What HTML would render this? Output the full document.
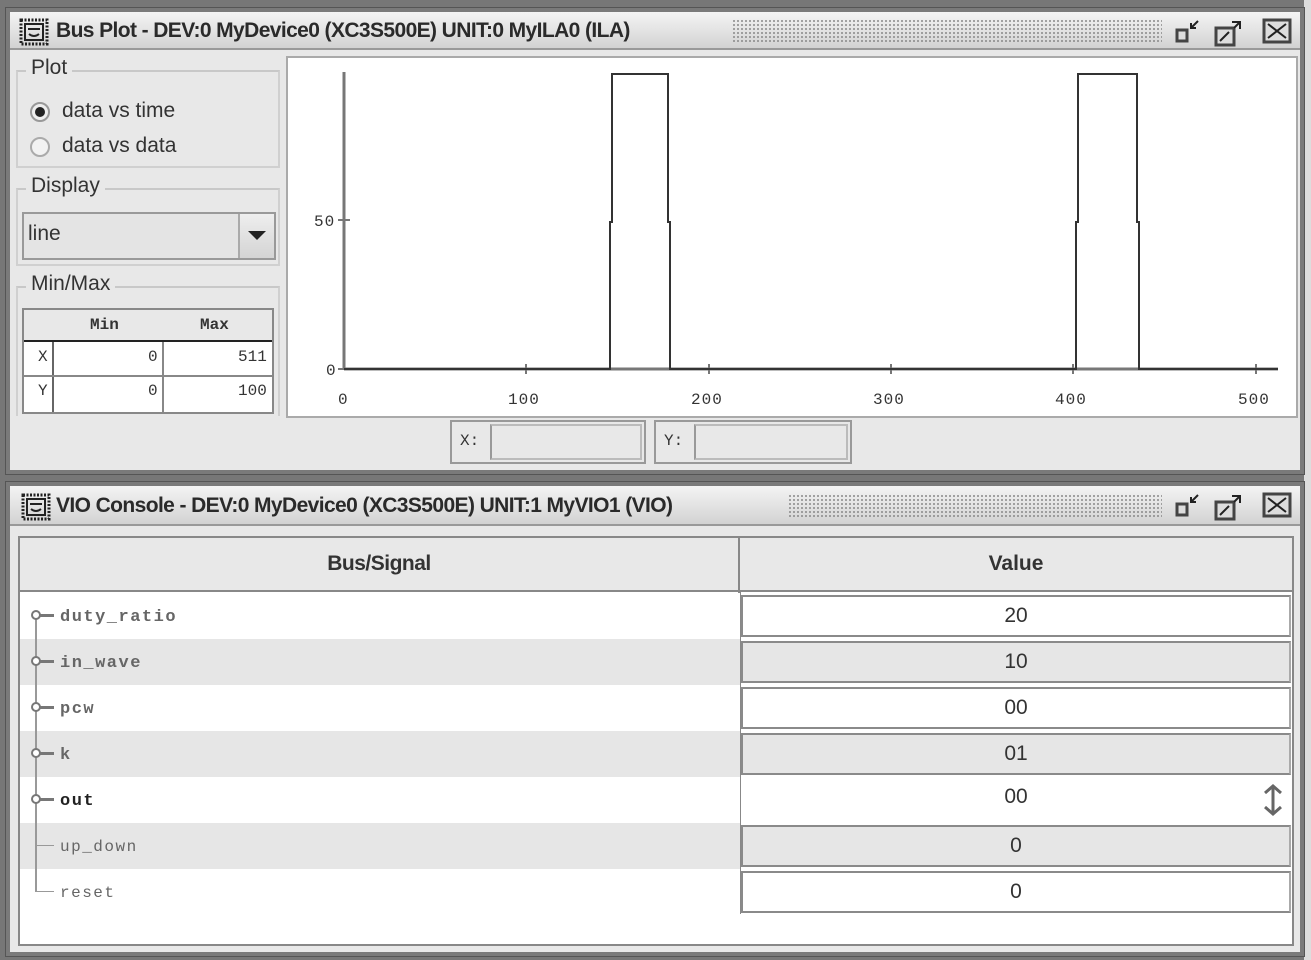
<!DOCTYPE html>
<html><head><meta charset="utf-8"><style>
*{box-sizing:border-box;margin:0;padding:0}
body{width:1311px;height:960px;overflow:hidden;background:#e4e4e4;font-family:"Liberation Sans",sans-serif;position:relative}
.a{position:absolute}
.win{position:absolute;background:#e8e8e8;border:4px solid #7a7a7a;outline:1px solid #555}
.title{position:absolute;left:0;right:0;height:38px;background:linear-gradient(#f4f4f4,#e0e0e0 60%,#d2d2d2);border-bottom:2px solid #999;font-weight:bold;font-size:21px;color:#2a2a2a;letter-spacing:-0.6px;line-height:38px;padding-left:46px;white-space:nowrap}
.dots{position:absolute;top:7px;height:24px;background-image:radial-gradient(#888 0.8px,transparent 1px);background-size:4px 4px}
.grp{position:absolute;border:2px solid #d0d0d0;border-top-color:#c8c8c8}
.gl{position:absolute;background:#e8e8e8;font-size:21px;color:#333;padding:0 5px;top:-16px;left:8px}
.cell{position:absolute;font-family:"Liberation Mono",monospace;font-size:16px;color:#333}
.row{position:absolute;left:0;width:720px;height:46px}
.sig{position:absolute;left:40px;font-family:"Liberation Mono",monospace;font-weight:bold;font-size:17px;color:#666;letter-spacing:1.5px;top:15px}
.val{position:absolute;left:721px;width:550px;height:42px;top:2px;border:2px solid #8a8a8a;border-right-color:#aaa;text-align:center;font-size:21px;color:#333;line-height:38px}
.knob{position:absolute;left:11px;top:17px;width:10px;height:10px;border:2.5px solid #777;border-radius:50%;background:#fff;z-index:2}
.stub{position:absolute;left:20px;top:21px;width:14px;height:3px;background:#777}
</style></head><body>
<div class="a" style="left:0;top:0;width:1311px;height:960px;background:#777"></div>
<div class="a" style="left:1304px;top:0;width:7px;height:960px;background:#ddd"></div>

<div class="win" style="left:6px;top:8px;width:1298px;height:466px">
 <div class="title" style="top:0">Bus Plot - DEV:0 MyDevice0 (XC3S500E) UNIT:0 MyILA0 (ILA)</div>
 <div class="dots" style="left:722px;width:430px"></div>
 <svg class="a" style="left:8px;top:6px" width="32" height="28" viewBox="0 0 32 28"><rect x="3" y="2" width="26" height="24" fill="none" stroke="#222" stroke-width="3" stroke-dasharray="2 1.5"/><rect x="7" y="6" width="18" height="16" fill="none" stroke="#222" stroke-width="2"/><path d="M10 11h12M11 16q5 4 10 0" stroke="#222" stroke-width="2" fill="none"/></svg>
 <svg class="a" style="left:1160px;top:4px" width="130" height="32"><rect x="7" y="14" width="10" height="11" fill="#ddd" stroke="#444" stroke-width="3"/><path d="M28 5l-7 7M21 7v5h5" stroke="#222" stroke-width="2" fill="none"/><rect x="46" y="12" width="18" height="17" fill="#ddd" stroke="#444" stroke-width="3"/><path d="M50 25l9-9M62 6l8 0 0 7M70 6l-6 6" stroke="#222" stroke-width="2" fill="none"/><rect x="94" y="4" width="26" height="22" fill="#ddd" stroke="#444" stroke-width="3"/><path d="M98 8l18 14M116 8l-18 14" stroke="#222" stroke-width="2"/></svg>

 <div class="grp" style="left:6px;top:58px;width:264px;height:98px"><div class="gl">Plot</div>
  <div class="a" style="left:12px;top:30px;width:20px;height:20px;border:2px solid #999;border-radius:50%;background:#eee"><div class="a" style="left:3px;top:3px;width:10px;height:10px;border-radius:50%;background:#222"></div></div>
  <div class="a" style="left:44px;top:27px;font-size:21px;color:#333">data vs time</div>
  <div class="a" style="left:12px;top:65px;width:20px;height:20px;border:2px solid #aaa;border-radius:50%;background:#f2f2f2"></div>
  <div class="a" style="left:44px;top:62px;font-size:21px;color:#333">data vs data</div>
 </div>
 <div class="grp" style="left:6px;top:176px;width:264px;height:78px"><div class="gl">Display</div>
  <div class="a" style="left:4px;top:22px;width:254px;height:48px;border:2px solid #999;background:#e4e4e4"><div class="a" style="left:4px;top:8px;font-size:21px;color:#333">line</div>
   <div class="a" style="left:214px;top:0;width:36px;height:44px;border-left:2px solid #aaa;background:linear-gradient(#eee,#d4d4d4)"><div class="a" style="left:8px;top:17px;border-left:9px solid transparent;border-right:9px solid transparent;border-top:9px solid #222"></div></div>
  </div>
 </div>
 <div class="grp" style="left:6px;top:274px;width:264px;height:130px;border-bottom:none"><div class="gl">Min/Max</div>
  <div class="a" style="left:4px;top:20px;width:252px;height:106px;border:2px solid #888;background:#fff">
   <div class="a" style="left:0;top:0;width:248px;height:32px;background:#e8e8e8;border-bottom:2px solid #222"></div>
   <div class="cell" style="left:66px;top:6px;font-weight:bold">Min</div>
   <div class="cell" style="left:176px;top:6px;font-weight:bold">Max</div>
   <div class="a" style="left:28px;top:32px;width:2px;height:70px;background:#666"></div>
   <div class="a" style="left:138px;top:32px;width:2px;height:70px;background:#888"></div>
   <div class="a" style="left:0;top:65px;width:248px;height:2px;background:#888"></div>
   <div class="cell" style="left:14px;top:38px">X</div><div class="cell" style="left:124px;top:38px">0</div><div class="cell" style="left:214px;top:38px">511</div>
   <div class="cell" style="left:14px;top:72px">Y</div><div class="cell" style="left:124px;top:72px">0</div><div class="cell" style="left:214px;top:72px">100</div>
  </div>
 </div>

 <div class="a" style="left:276px;top:44px;width:1012px;height:362px;background:#fff;border:2px solid #aaa"></div>
 <svg class="a" style="left:-10px;top:-12px" width="1311" height="430">
  <path d="M344 72V369M344 369H1278" stroke="#777" stroke-width="3" fill="none"/>
  <path d="M338 220h12M338 369h6M526 364v10M709 364v10M891 364v10M1073 364v10M1256 364v10" stroke="#777" stroke-width="2"/>
  <polyline points="344,369 610,369 610,222 612,222 612,74 668,74 668,222 670,222 670,369 1076,369 1076,222 1078,222 1078,74 1137,74 1137,222 1139,222 1139,369 1278,369" fill="none" stroke="#333" stroke-width="2"/>
  <g font-family="Liberation Mono,monospace" font-size="16" fill="#333" letter-spacing="1">
   <text x="314" y="226">50</text><text x="326" y="375">0</text>
   <text x="338" y="404">0</text><text x="508" y="404">100</text><text x="691" y="404">200</text><text x="873" y="404">300</text><text x="1055" y="404">400</text><text x="1238" y="404">500</text>
  </g>
 </svg>
 <div class="a" style="left:440px;top:408px;width:196px;height:44px;border:2px solid #999;background:#e8e8e8"><div class="cell" style="left:8px;top:10px">X:</div><div class="a" style="left:38px;top:2px;width:152px;height:36px;border:2px solid #bbb;border-left-color:#999"></div></div>
 <div class="a" style="left:644px;top:408px;width:198px;height:44px;border:2px solid #999;background:#e8e8e8"><div class="cell" style="left:8px;top:10px">Y:</div><div class="a" style="left:38px;top:2px;width:154px;height:36px;border:2px solid #bbb;border-left-color:#999"></div></div>
</div>

<div class="win" style="left:6px;top:482px;width:1298px;height:474px">
 <div class="title" style="top:0;height:40px;line-height:40px">VIO Console - DEV:0 MyDevice0 (XC3S500E) UNIT:1 MyVIO1 (VIO)</div>
 <div class="dots" style="left:778px;width:374px;top:8px"></div>
 <svg class="a" style="left:10px;top:7px" width="32" height="28" viewBox="0 0 32 28"><rect x="3" y="2" width="26" height="24" fill="none" stroke="#222" stroke-width="3" stroke-dasharray="2 1.5"/><rect x="7" y="6" width="18" height="16" fill="none" stroke="#222" stroke-width="2"/><path d="M10 11h12M11 16q5 4 10 0" stroke="#222" stroke-width="2" fill="none"/></svg>
 <svg class="a" style="left:1160px;top:4px" width="130" height="32"><rect x="7" y="14" width="10" height="11" fill="#ddd" stroke="#444" stroke-width="3"/><path d="M28 5l-7 7M21 7v5h5" stroke="#222" stroke-width="2" fill="none"/><rect x="46" y="12" width="18" height="17" fill="#ddd" stroke="#444" stroke-width="3"/><path d="M50 25l9-9M62 6l8 0 0 7M70 6l-6 6" stroke="#222" stroke-width="2" fill="none"/><rect x="94" y="4" width="26" height="22" fill="#ddd" stroke="#444" stroke-width="3"/><path d="M98 8l18 14M116 8l-18 14" stroke="#222" stroke-width="2"/></svg>

 <div class="a" style="left:8px;top:50px;width:1276px;height:410px;background:#fff;border:2px solid #888">
  <div class="a" style="left:0;top:0;width:1272px;height:54px;background:#e8e8e8;border-bottom:2px solid #888"></div>
  <div class="a" style="left:718px;top:0;width:2px;height:54px;background:#888"></div>
  <div class="a" style="left:0;top:14px;width:718px;text-align:center;font-weight:bold;font-size:21px;color:#333;letter-spacing:-0.5px">Bus/Signal</div>
  <div class="a" style="left:720px;top:14px;width:552px;text-align:center;font-weight:bold;font-size:21px;color:#333">Value</div>
  <div class="a" style="left:718px;top:54px;width:3px;height:322px;background:#888"></div>

  <div class="row" style="top:55px;background:#fff"><div class="knob"></div><div class="stub"></div><div class="sig">duty_ratio</div><div class="val" style="background:#fff">20</div></div>
  <div class="row" style="top:101px;background:#e6e6e6"><div class="knob"></div><div class="stub"></div><div class="sig">in_wave</div><div class="val" style="background:#e6e6e6">10</div></div>
  <div class="row" style="top:147px;background:#fff"><div class="knob"></div><div class="stub"></div><div class="sig">pcw</div><div class="val" style="background:#fff">00</div></div>
  <div class="row" style="top:193px;background:#e6e6e6"><div class="knob"></div><div class="stub"></div><div class="sig">k</div><div class="val" style="background:#e6e6e6">01</div></div>
  <div class="row" style="top:239px;background:#fff"><div class="knob"></div><div class="stub"></div><div class="sig" style="color:#222">out</div>
   <div class="a" style="left:721px;top:8px;width:550px;text-align:center;font-size:21px;color:#333">00</div>
   <svg class="a" style="left:1240px;top:6px" width="26" height="34"><path d="M13 3v28M5 10l8-7 8 7M5 24l8 7 8-7" stroke="#666" stroke-width="3" fill="none"/></svg></div>
  <div class="row" style="top:285px;background:#e6e6e6"><div class="a" style="left:16px;top:22px;width:18px;height:1px;background:#999"></div><div class="sig" style="font-weight:normal;font-size:16px">up_down</div><div class="val" style="background:#e6e6e6">0</div></div>
  <div class="row" style="top:331px;background:#fff"><div class="a" style="left:16px;top:22px;width:18px;height:1px;background:#999"></div><div class="sig" style="font-weight:normal;font-size:16px">reset</div><div class="val" style="background:#fff">0</div></div>
  <div class="a" style="left:15px;top:76px;width:2px;height:278px;background:#999;z-index:1"></div>
 </div>
</div>
</body></html>
